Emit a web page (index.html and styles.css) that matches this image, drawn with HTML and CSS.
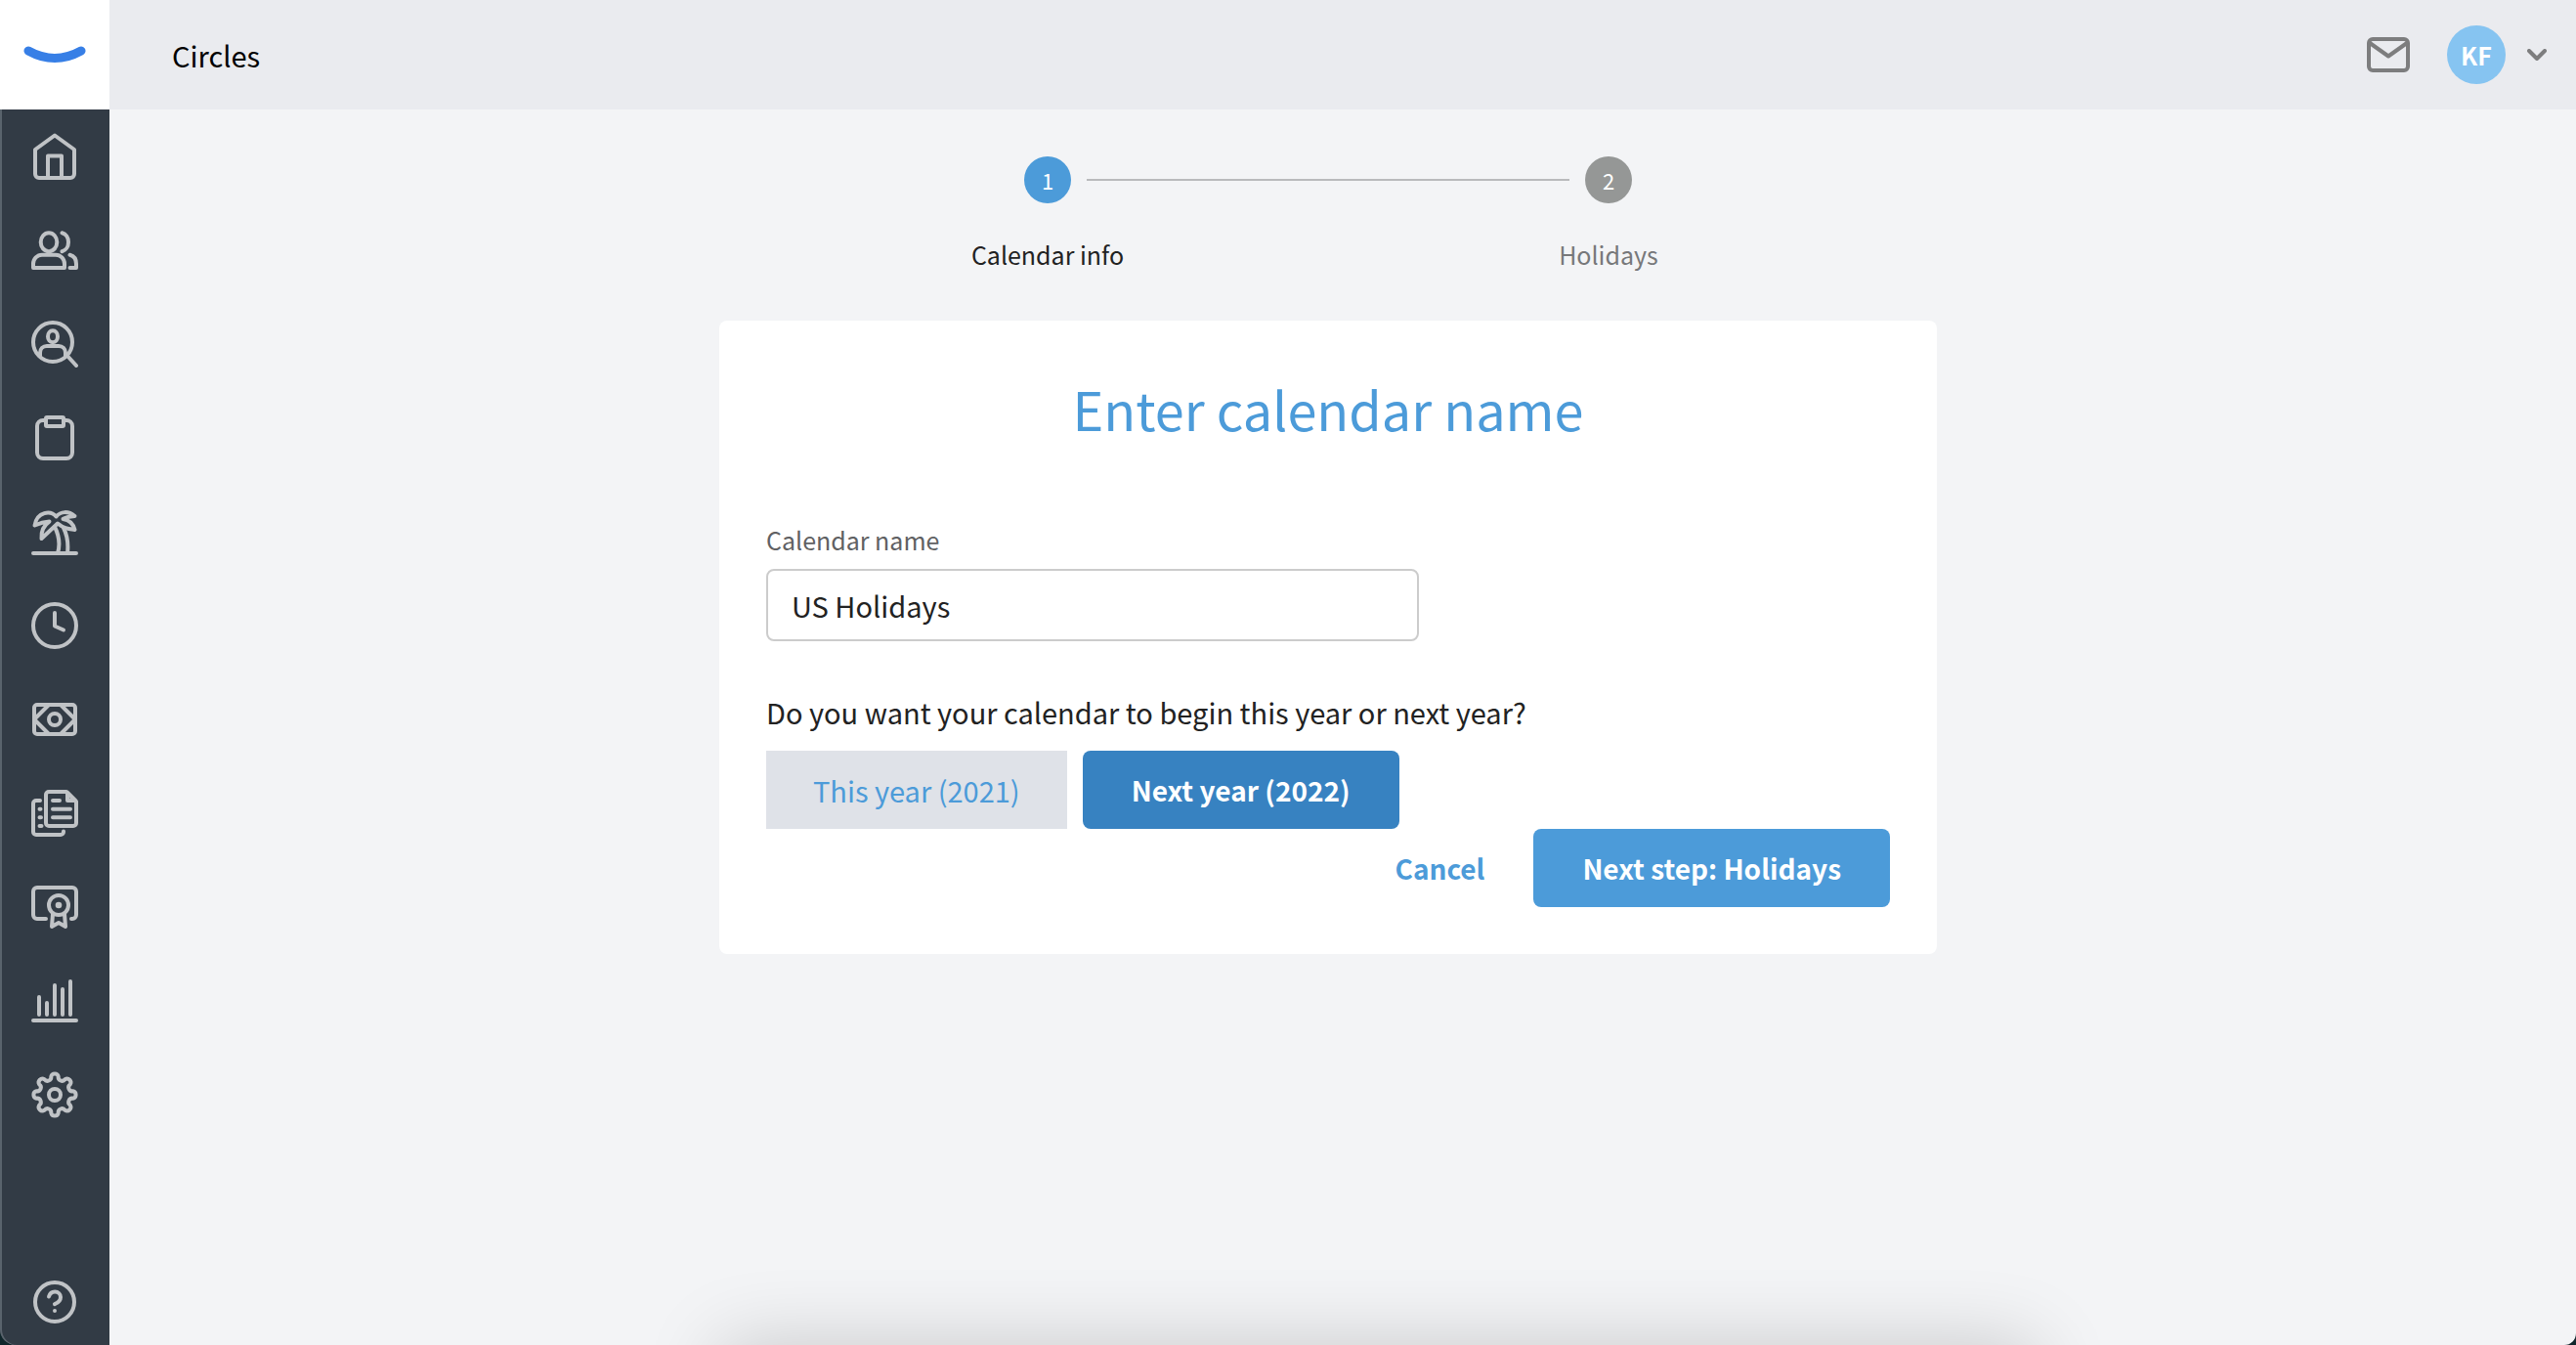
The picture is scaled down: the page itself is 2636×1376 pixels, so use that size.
FILE: index.html
```html
<!DOCTYPE html>
<html lang="en">
<head>
    <meta charset="UTF-8">
    <meta name="viewport" content="width=device-width, initial-scale=1.0">
    <title>Circles - Calendar info</title>
    <link rel="stylesheet" href="styles.css">
</head>
<body>
    <div class="app">
        <!-- Sidebar -->
        <aside class="sidebar">
            <a class="logo" href="#" aria-label="Home page">
                <svg width="64" height="20" viewBox="0 0 64 20"><path d="M5 6Q32 21 59 6"/></svg>
            </a>
            <nav class="nav">
                <a class="nav-item" href="#" aria-label="Home">
                    <svg class="icon" viewBox="0 0 48 48"><path d="M24 2.500 4 17v25a4 4 0 0 0 4 4h32a4 4 0 0 0 4-4V17z"/><path d="M17 46V23.500h14V46"/></svg>
                </a>
                <a class="nav-item" href="#" aria-label="People">
                    <svg class="icon" viewBox="0 0 48 48"><ellipse cx="18" cy="15.700" rx="8.300" ry="9.500"/><path d="M2 42v-4c0-5 4-9.300 9-9.300h14c5 0 9 4.300 9 9.300v4z"/><path d="M31.500 6.200c4 1 6.500 5 6.500 9.500s-2.500 8.500-6.500 9.500M39.500 28.700c4 1 6.500 4.300 6.500 9.300v4h-6.500"/></svg>
                </a>
                <a class="nav-item" href="#" aria-label="Hiring">
                    <svg class="icon" viewBox="0 0 48 48"><circle cx="22" cy="22" r="20"/><ellipse cx="22" cy="16.300" rx="5" ry="6"/><path d="M9 36v-3c0-4 3-7 7-7h12c4 0 7 3 7 7v3M36 35l10 11"/></svg>
                </a>
                <a class="nav-item" href="#" aria-label="Tasks">
                    <svg class="icon" viewBox="0 0 48 48"><path d="M14 6h-2a6 6 0 0 0-6 6v27a6 6 0 0 0 6 6h24a6 6 0 0 0 6-6V12a6 6 0 0 0-6-6h-2"/><rect x="15" y="3" width="18" height="9" rx="1"/></svg>
                </a>
                <a class="nav-item" href="#" aria-label="Time off">
                    <svg class="icon" viewBox="0 0 48 48"><path d="M2 46h44M24 19c4 8 6 17 3 27M33 20c4 8 5 17 4 26"/><path d="M25.500 8.500C20 2 6 3 3.500 17.500 8 15.500 12 14 18.500 13.500 12 18 10 24 10.500 31L27 15.500c6 5 11 5.500 17.500 6.500C43 16 39 12 32.500 11c3-2 7-2.500 12-3C38 2.500 30 3 25.500 8.500z"/></svg>
                </a>
                <a class="nav-item" href="#" aria-label="Time tracking">
                    <svg class="icon" viewBox="0 0 48 48"><circle cx="24" cy="24" r="22"/><path d="M24 11v13.500l9 4"/></svg>
                </a>
                <a class="nav-item" href="#" aria-label="Payroll">
                    <svg class="icon" viewBox="0 0 48 48"><rect x="3" y="9" width="42" height="30" rx="3"/><circle cx="24" cy="24" r="6"/><path d="M18 9 4 23v2l14 14M30 9l14 14v2L30 39"/></svg>
                </a>
                <a class="nav-item" href="#" aria-label="Documents">
                    <svg class="icon" viewBox="0 0 48 48"><path d="M15 5a3 3 0 0 1 3-3h18l10 10v22a3 3 0 0 1-3 3H18a3 3 0 0 1-3-3z"/><path d="M37 3v8h8zM22 11h7M22 19.700h18M22 28.300h18M9 11H5a3 3 0 0 0-3 3v29a3 3 0 0 0 3 3h25a3 3 0 0 0 3-3v-.5M8.500 19.700h1M8.500 28.300h1.500M8.500 37h2"/></svg>
                </a>
                <a class="nav-item" href="#" aria-label="Training">
                    <svg class="icon" viewBox="0 0 48 48"><path d="M15 36H6a4 4 0 0 1-4-4V8a4 4 0 0 1 4-4h36a4 4 0 0 1 4 4v24a4 4 0 0 1-4 4h-1"/><circle cx="28" cy="22" r="10"/><circle class="dot" cx="28" cy="22" r="3.300"/><path d="m22 31-1 13 7-4 7 4-1-13"/></svg>
                </a>
                <a class="nav-item" href="#" aria-label="Reports">
                    <svg class="icon" viewBox="0 0 48 48"><path d="M2 44h44M8 20v18M16 26v12M24 8v30M32 12v26M40 4v34"/></svg>
                </a>
                <a class="nav-item" href="#" aria-label="Settings">
                    <svg class="icon" viewBox="0 0 48 48"><circle cx="24" cy="24" r="6"/><path d="M42.630 20.290A3.800 3.800 0 0 1 42.630 27.710A3.800 3.800 0 0 0 39.800 34.560A3.800 3.800 0 0 1 34.560 39.800A3.800 3.800 0 0 0 27.710 42.630A3.800 3.800 0 0 1 20.290 42.630A3.800 3.800 0 0 0 13.440 39.800A3.800 3.800 0 0 1 8.200 34.560A3.800 3.800 0 0 0 5.370 27.710A3.800 3.800 0 0 1 5.370 20.290A3.800 3.800 0 0 0 8.200 13.440A3.800 3.800 0 0 1 13.440 8.200A3.800 3.800 0 0 0 20.290 5.370A3.800 3.800 0 0 1 27.710 5.370A3.800 3.800 0 0 0 34.560 8.200A3.800 3.800 0 0 1 39.800 13.440A3.800 3.800 0 0 0 42.630 20.290z"/></svg>
                </a>
                <a class="nav-item nav-help" href="#" aria-label="Help">
                    <svg class="icon" viewBox="0 0 48 48"><circle cx="24" cy="24" r="20"/><path d="M18 18.500c1-3.500 3.500-5 6.200-5 3.300 0 5.800 2.500 5.800 5.500 0 4-3 6-6 7.200M24 33v.1"/></svg>
                </a>
            </nav>
        </aside>

        <div class="page">
            <!-- Top bar -->
            <header class="topbar">
                <div class="company">Circles</div>
                <a class="mail" href="#" aria-label="Messages">
                    <svg width="44" height="36" viewBox="0 0 44 36"><rect x="2" y="2" width="40" height="32" rx="4"/><path d="m3 6 19 13.500L41 6"/></svg>
                </a>
                <button class="account" type="button" aria-label="Account menu">
                    <span class="avatar">KF</span>
                    <svg width="20" height="12" viewBox="0 0 20 12"><path d="m2 2 8 8 8-8"/></svg>
                </button>
            </header>

            <main class="content">
                <ol class="steps">
                    <li class="step active">
                        <span class="step-number">1</span>
                        <span class="step-label">Calendar info</span>
                    </li>
                    <li class="step">
                        <span class="step-number">2</span>
                        <span class="step-label">Holidays</span>
                    </li>
                </ol>

                <form class="card">
                    <h1>Enter calendar name</h1>
                    <label class="field-label" for="calendar-name">Calendar name</label>
                    <input class="field" id="calendar-name" type="text" value="US Holidays">
                    <p class="question" id="year-question">Do you want your calendar to begin this year or next year?</p>
                    <div class="years" role="group" aria-labelledby="year-question">
                        <button class="btn btn-plain" type="button">This year (2021)</button>
                        <button class="btn btn-selected" type="button" aria-pressed="true">Next year (2022)</button>
                    </div>
                    <div class="actions">
                        <a class="cancel" href="#">Cancel</a>
                        <button class="btn btn-primary" type="button">Next step: Holidays</button>
                    </div>
                </form>
            </main>
        </div>
    </div>
    <div class="bottom-shadow"></div>
</body>
</html>
```
FILE: styles.css
```css
* {
    box-sizing: border-box;
}

body {
    margin: 0;
    background-color: #10262b;
    color: #222;
    font-family: "Noto Sans CJK SC", "Noto Sans", sans-serif;
    font-size: 29px;
    line-height: 48px;
}

a {
    color: inherit;
    text-decoration: none;
}

button, input {
    font: inherit;
}

button {
    border: none;
    cursor: pointer;
}

svg {
    display: block;
    fill: none;
    stroke: currentColor;
    stroke-width: 4;
    stroke-linecap: round;
    stroke-linejoin: round;
}

.app {
    display: flex;
    min-height: 100vh;
}

/* Sidebar */
.sidebar {
    display: flex;
    flex-direction: column;
    width: 112px;
    flex-shrink: 0;
}

.logo {
    display: flex;
    align-items: center;
    justify-content: center;
    height: 112px;
    background-color: #fff;
    color: #377fe6;
}

.logo svg {
    stroke-width: 9;
}

.nav {
    flex: 1;
    display: flex;
    flex-direction: column;
    background-color: #323b45;
    color: #c0c3c6;
    box-shadow: inset 2px 0 #59636c;
    border-bottom-left-radius: 16px;
}

.nav-item {
    display: flex;
    align-items: center;
    justify-content: center;
    height: 96px;
}

.nav-help {
    height: 88px;
    margin-top: auto;
}

.icon {
    width: 48px;
    height: 48px;
}

.icon .dot {
    fill: currentColor;
    stroke: none;
}

/* Top bar */
.page {
    flex: 1;
    background-color: #f3f4f6;
    border-bottom-right-radius: 12px;
}

.topbar {
    display: flex;
    align-items: center;
    height: 112px;
    padding: 0 30px 0 64px;
    background-color: #eaebef;
    color: #7d7d7e;
}

.company {
    margin-right: auto;
    color: #000;
}

.mail {
    margin-right: 38px;
}

.account {
    display: flex;
    align-items: center;
    gap: 22px;
    padding: 0;
    background: none;
    color: inherit;
}

.avatar {
    width: 60px;
    height: 60px;
    border-radius: 50%;
    background-color: #86c4f1;
    color: #fff;
    font-size: 25px;
    font-weight: bold;
    line-height: 60px;
    text-align: center;
}

.content {
    padding: 48px 30px 48px 0;
}

.steps {
    display: grid;
    grid-template-columns: 1fr 1fr;
    max-width: 1148px;
    margin: 0 auto 48px;
    padding: 0;
    list-style: none;
}

.step {
    display: grid;
    grid-template-columns: 1fr 48px 1fr;
    align-items: center;
    row-gap: 32px;
    color: #77787a;
    font-size: 25px;
    line-height: 40px;
}

.step::before,
.step::after {
    content: "";
    height: 2px;
    grid-row: 1;
}

.step:not(:last-child)::after,
.step:not(:first-child)::before {
    background-color: #b9babc;
}

.step::after {
    grid-column: 3;
    margin-left: 16px;
}

.step::before {
    grid-column: 1;
    margin-right: 16px;
}

.step-number {
    grid-row: 1;
    grid-column: 2;
    border-radius: 50%;
    background-color: #959796;
    color: #fff;
    font-size: 22px;
    line-height: 48px;
    text-align: center;
}

.step-label {
    grid-row: 2;
    grid-column: 1 / -1;
    text-align: center;
}

.step.active {
    color: #222;
}

.step.active .step-number {
    background-color: #4c9bd9;
}

/* Form */
.card {
    max-width: 1246px;
    margin: 0 auto;
    padding: 48px;
    border-radius: 8px;
    background-color: #fff;
}

h1 {
    margin: 0 0 72px;
    color: #4c9bd9;
    font-size: 54px;
    font-weight: normal;
    line-height: 84px;
    text-align: center;
}

.field-label {
    display: block;
    margin-bottom: 10px;
    color: #606163;
    font-size: 25px;
    line-height: 40px;
}

.field {
    display: block;
    width: 100%;
    max-width: 668px;
    height: 74px;
    padding: 0 24px;
    border: 2px solid #ccc;
    border-radius: 8px;
    background-color: #fff;
    color: #222;
}

.question {
    margin: 48px 0 16px;
}

.years {
    display: flex;
    gap: 16px;
}

.btn {
    padding: 16px 50px;
    border-radius: 8px;
    color: #fff;
    font-size: 28px;
    font-weight: bold;
}

.btn-plain {
    padding: 16px 48px;
    border-radius: 0;
    background-color: #dfe2e8;
    color: #4c9bd9;
    font-size: 29px;
    font-weight: normal;
}

.btn-selected {
    background-color: #3782c1;
}

.btn-primary {
    background-color: #4c9bd9;
}

.actions {
    display: flex;
    align-items: center;
    justify-content: flex-end;
    gap: 50px;
}

.cancel {
    color: #4c9bd9;
    font-size: 28px;
    font-weight: bold;
}

/* Shadow rising from below the window */
.bottom-shadow {
    position: fixed;
    top: 100%;
    left: 28%;
    right: 21%;
    height: 160px;
    box-shadow: 0 0 80px rgba(0, 0, 0, 0.18);
    pointer-events: none;
}
```
